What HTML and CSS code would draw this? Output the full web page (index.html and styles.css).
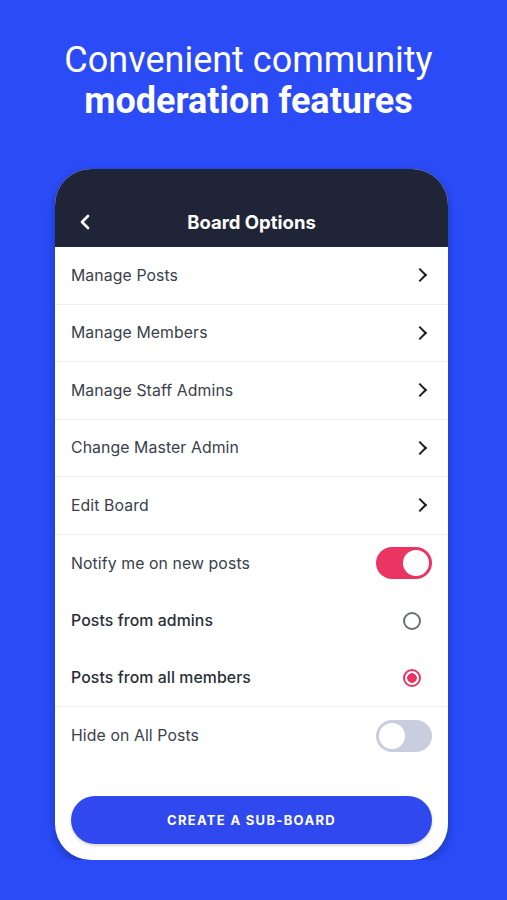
FILE: index.html
```html
<!DOCTYPE html>
<html lang="en">
<head>
  <meta charset="UTF-8" />
  <meta name="viewport" content="width=device-width, initial-scale=1.0"/>
  <title>Board Options</title>
  <link rel="stylesheet" href="styles.css">
</head>
<body>
  <h1 class="headline">Convenient community<br><strong>moderation features</strong></h1>

  <div class="phone">
    <div class="topbar">
      <svg class="back" width="14" height="16" viewBox="0 0 14 16"><path d="M10 2 L4 8 L10 14" fill="none" stroke="#fff" stroke-width="2.6" stroke-linecap="round" stroke-linejoin="round"/></svg>
      <span class="topbar-title">Board Options</span>
    </div>

    <ul class="options">
      <li class="row line">Manage Posts <span class="chev"></span></li>
      <li class="row line">Manage Members <span class="chev"></span></li>
      <li class="row line">Manage Staff Admins <span class="chev"></span></li>
      <li class="row line">Change Master Admin <span class="chev"></span></li>
      <li class="row line">Edit Board <span class="chev"></span></li>
      <li class="row">Notify me on new posts <span class="toggle on"></span></li>
      <li class="row strong">Posts from admins <span class="radio"></span></li>
      <li class="row strong line">Posts from all members <span class="radio checked"></span></li>
      <li class="row">Hide on All Posts <span class="toggle"></span></li>
    </ul>

    <div class="footer">
      <button class="sub-board">CREATE A SUB-BOARD</button>
    </div>
  </div>
</body>
</html>
```

FILE: styles.css
```css
body { margin: 0; background: #2a4bf6; font-family: Inter, "Noto Sans", sans-serif; }
.headline { margin: 40px 0 0; padding-right: 10px; text-align: center; color: #fff; font-family: Roboto, sans-serif; font-weight: 400; font-size: 36px; line-height: 41px; }
.headline strong { font-weight: 700; }

.phone { margin: 47px 59px 0 55px; background: #fff; border-radius: 36px; overflow: hidden; box-shadow: 0 4px 8px rgba(10, 20, 80, 0.35); }
.topbar { height: 78px; background: #1f2437; display: flex; align-items: center; justify-content: center; position: relative; }
.topbar-title { color: #fff; font-weight: 700; font-size: 18.5px; margin-top: 28px; }
.back { position: absolute; left: 23px; top: 45px; }

.options { list-style: none; margin: 0; padding: 0; }
.row { height: 57.5px; display: flex; align-items: center; justify-content: space-between; padding: 0 16px; color: #3b404b; font-size: 15.8px; letter-spacing: 0.1px; }
.row.line { border-bottom: 1px solid #eeeff2; height: 56.5px; }
.row.strong { color: #2a2e37; font-weight: 500; }

.chev { width: 8px; height: 8px; border-top: 2.4px solid #1c1f26; border-right: 2.4px solid #1c1f26; transform: rotate(45deg); margin-right: 7px; }

.toggle { width: 56px; height: 32px; border-radius: 16px; background: #c8cedf; position: relative; }
.toggle::after { content: ""; position: absolute; top: 3px; left: 3px; width: 26px; height: 26px; border-radius: 50%; background: #fff; }
.toggle.on { background: #ea3462; }
.toggle.on::after { left: 27px; }

.radio { width: 18px; height: 18px; border: 2px solid #6b6e74; border-radius: 50%; margin-right: 11px; box-sizing: border-box; }
.radio.checked { border-color: #ea3462; background: radial-gradient(circle, #ea3462 0 4.5px, #fff 5px); }

.footer { padding: 31px 16px 16px; }
.sub-board { width: 100%; height: 48px; border: none; border-radius: 24px; background: #2f49ef; color: #fff; font-family: Inter, sans-serif; font-weight: 700; font-size: 13px; letter-spacing: 1.3px; box-shadow: 0 2px 3px rgba(0,0,0,0.15); }
```
